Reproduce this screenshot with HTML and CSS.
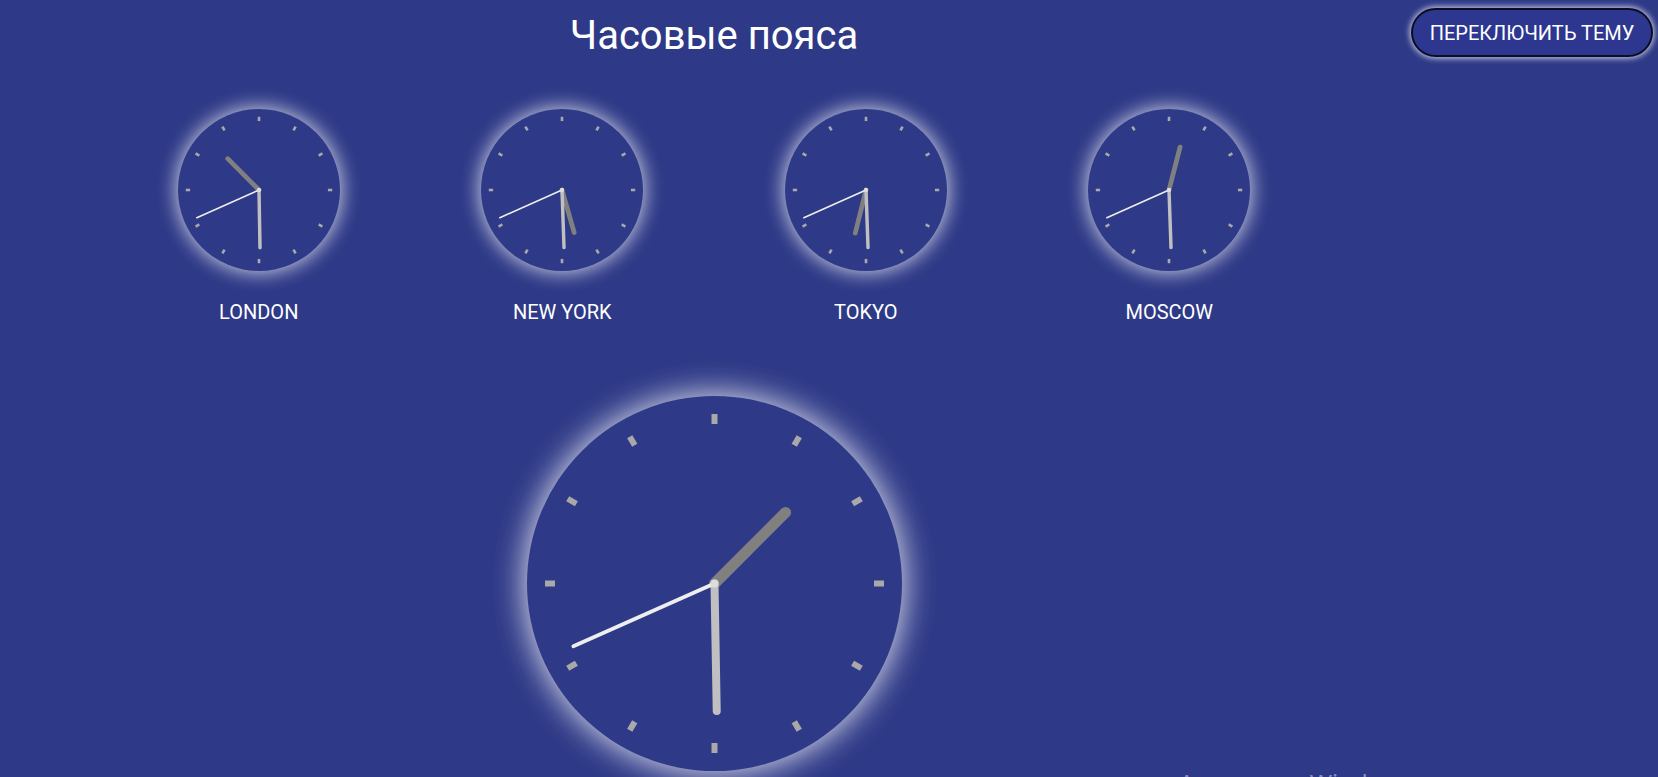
FILE: index.html
```html
<!DOCTYPE html>
<html lang="ru">
<head>
<meta charset="utf-8">
<title>Часовые пояса</title>
<link rel="stylesheet" href="styles.css">
</head>
<body>
<button class="theme-btn">ПЕРЕКЛЮЧИТЬ ТЕМУ</button>
<main class="page">
  <h1 class="title">Часовые пояса</h1>
  <section class="zones">
    <div class="zone">
      <div class="face small">
        <svg viewBox="0 0 375 375">
          <g class="ticks">
            <line x1="187.5" y1="18" x2="187.5" y2="28"/>
            <line x1="187.5" y1="18" x2="187.5" y2="28" transform="rotate(30 187.5 187.5)"/>
            <line x1="187.5" y1="18" x2="187.5" y2="28" transform="rotate(60 187.5 187.5)"/>
            <line x1="187.5" y1="18" x2="187.5" y2="28" transform="rotate(90 187.5 187.5)"/>
            <line x1="187.5" y1="18" x2="187.5" y2="28" transform="rotate(120 187.5 187.5)"/>
            <line x1="187.5" y1="18" x2="187.5" y2="28" transform="rotate(150 187.5 187.5)"/>
            <line x1="187.5" y1="18" x2="187.5" y2="28" transform="rotate(180 187.5 187.5)"/>
            <line x1="187.5" y1="18" x2="187.5" y2="28" transform="rotate(210 187.5 187.5)"/>
            <line x1="187.5" y1="18" x2="187.5" y2="28" transform="rotate(240 187.5 187.5)"/>
            <line x1="187.5" y1="18" x2="187.5" y2="28" transform="rotate(270 187.5 187.5)"/>
            <line x1="187.5" y1="18" x2="187.5" y2="28" transform="rotate(300 187.5 187.5)"/>
            <line x1="187.5" y1="18" x2="187.5" y2="28" transform="rotate(330 187.5 187.5)"/>
          </g>
          <line class="hour" x1="187.5" y1="187.5" x2="187.5" y2="85" transform="rotate(315 187.5 187.5)"/>
          <line class="minute" x1="187.5" y1="187.5" x2="187.5" y2="54" transform="rotate(179 187.5 187.5)"/>
          <line class="second" x1="187.5" y1="187.5" x2="187.5" y2="30" transform="rotate(246 187.5 187.5)"/>
          <circle class="pin" cx="187.5" cy="187.5" r="5"/>
        </svg>
      </div>
      <div class="city">LONDON</div>
    </div>
    <div class="zone">
      <div class="face small">
        <svg viewBox="0 0 375 375">
          <g class="ticks">
            <line x1="187.5" y1="18" x2="187.5" y2="28"/>
            <line x1="187.5" y1="18" x2="187.5" y2="28" transform="rotate(30 187.5 187.5)"/>
            <line x1="187.5" y1="18" x2="187.5" y2="28" transform="rotate(60 187.5 187.5)"/>
            <line x1="187.5" y1="18" x2="187.5" y2="28" transform="rotate(90 187.5 187.5)"/>
            <line x1="187.5" y1="18" x2="187.5" y2="28" transform="rotate(120 187.5 187.5)"/>
            <line x1="187.5" y1="18" x2="187.5" y2="28" transform="rotate(150 187.5 187.5)"/>
            <line x1="187.5" y1="18" x2="187.5" y2="28" transform="rotate(180 187.5 187.5)"/>
            <line x1="187.5" y1="18" x2="187.5" y2="28" transform="rotate(210 187.5 187.5)"/>
            <line x1="187.5" y1="18" x2="187.5" y2="28" transform="rotate(240 187.5 187.5)"/>
            <line x1="187.5" y1="18" x2="187.5" y2="28" transform="rotate(270 187.5 187.5)"/>
            <line x1="187.5" y1="18" x2="187.5" y2="28" transform="rotate(300 187.5 187.5)"/>
            <line x1="187.5" y1="18" x2="187.5" y2="28" transform="rotate(330 187.5 187.5)"/>
          </g>
          <line class="hour" x1="187.5" y1="187.5" x2="187.5" y2="85" transform="rotate(164 187.5 187.5)"/>
          <line class="minute" x1="187.5" y1="187.5" x2="187.5" y2="54" transform="rotate(178 187.5 187.5)"/>
          <line class="second" x1="187.5" y1="187.5" x2="187.5" y2="30" transform="rotate(246 187.5 187.5)"/>
          <circle class="pin" cx="187.5" cy="187.5" r="5"/>
        </svg>
      </div>
      <div class="city">NEW YORK</div>
    </div>
    <div class="zone">
      <div class="face small">
        <svg viewBox="0 0 375 375">
          <g class="ticks">
            <line x1="187.5" y1="18" x2="187.5" y2="28"/>
            <line x1="187.5" y1="18" x2="187.5" y2="28" transform="rotate(30 187.5 187.5)"/>
            <line x1="187.5" y1="18" x2="187.5" y2="28" transform="rotate(60 187.5 187.5)"/>
            <line x1="187.5" y1="18" x2="187.5" y2="28" transform="rotate(90 187.5 187.5)"/>
            <line x1="187.5" y1="18" x2="187.5" y2="28" transform="rotate(120 187.5 187.5)"/>
            <line x1="187.5" y1="18" x2="187.5" y2="28" transform="rotate(150 187.5 187.5)"/>
            <line x1="187.5" y1="18" x2="187.5" y2="28" transform="rotate(180 187.5 187.5)"/>
            <line x1="187.5" y1="18" x2="187.5" y2="28" transform="rotate(210 187.5 187.5)"/>
            <line x1="187.5" y1="18" x2="187.5" y2="28" transform="rotate(240 187.5 187.5)"/>
            <line x1="187.5" y1="18" x2="187.5" y2="28" transform="rotate(270 187.5 187.5)"/>
            <line x1="187.5" y1="18" x2="187.5" y2="28" transform="rotate(300 187.5 187.5)"/>
            <line x1="187.5" y1="18" x2="187.5" y2="28" transform="rotate(330 187.5 187.5)"/>
          </g>
          <line class="hour" x1="187.5" y1="187.5" x2="187.5" y2="85" transform="rotate(194 187.5 187.5)"/>
          <line class="minute" x1="187.5" y1="187.5" x2="187.5" y2="54" transform="rotate(178 187.5 187.5)"/>
          <line class="second" x1="187.5" y1="187.5" x2="187.5" y2="30" transform="rotate(246 187.5 187.5)"/>
          <circle class="pin" cx="187.5" cy="187.5" r="5"/>
        </svg>
      </div>
      <div class="city">TOKYO</div>
    </div>
    <div class="zone">
      <div class="face small">
        <svg viewBox="0 0 375 375">
          <g class="ticks">
            <line x1="187.5" y1="18" x2="187.5" y2="28"/>
            <line x1="187.5" y1="18" x2="187.5" y2="28" transform="rotate(30 187.5 187.5)"/>
            <line x1="187.5" y1="18" x2="187.5" y2="28" transform="rotate(60 187.5 187.5)"/>
            <line x1="187.5" y1="18" x2="187.5" y2="28" transform="rotate(90 187.5 187.5)"/>
            <line x1="187.5" y1="18" x2="187.5" y2="28" transform="rotate(120 187.5 187.5)"/>
            <line x1="187.5" y1="18" x2="187.5" y2="28" transform="rotate(150 187.5 187.5)"/>
            <line x1="187.5" y1="18" x2="187.5" y2="28" transform="rotate(180 187.5 187.5)"/>
            <line x1="187.5" y1="18" x2="187.5" y2="28" transform="rotate(210 187.5 187.5)"/>
            <line x1="187.5" y1="18" x2="187.5" y2="28" transform="rotate(240 187.5 187.5)"/>
            <line x1="187.5" y1="18" x2="187.5" y2="28" transform="rotate(270 187.5 187.5)"/>
            <line x1="187.5" y1="18" x2="187.5" y2="28" transform="rotate(300 187.5 187.5)"/>
            <line x1="187.5" y1="18" x2="187.5" y2="28" transform="rotate(330 187.5 187.5)"/>
          </g>
          <line class="hour" x1="187.5" y1="187.5" x2="187.5" y2="85" transform="rotate(14.5 187.5 187.5)"/>
          <line class="minute" x1="187.5" y1="187.5" x2="187.5" y2="54" transform="rotate(178 187.5 187.5)"/>
          <line class="second" x1="187.5" y1="187.5" x2="187.5" y2="30" transform="rotate(246 187.5 187.5)"/>
          <circle class="pin" cx="187.5" cy="187.5" r="5"/>
        </svg>
      </div>
      <div class="city">MOSCOW</div>
    </div>
  </section>
  <section class="local">
    <div class="face big">
      <svg viewBox="0 0 375 375">
        <g class="ticks">
          <line x1="187.5" y1="18" x2="187.5" y2="28"/>
          <line x1="187.5" y1="18" x2="187.5" y2="28" transform="rotate(30 187.5 187.5)"/>
          <line x1="187.5" y1="18" x2="187.5" y2="28" transform="rotate(60 187.5 187.5)"/>
          <line x1="187.5" y1="18" x2="187.5" y2="28" transform="rotate(90 187.5 187.5)"/>
          <line x1="187.5" y1="18" x2="187.5" y2="28" transform="rotate(120 187.5 187.5)"/>
          <line x1="187.5" y1="18" x2="187.5" y2="28" transform="rotate(150 187.5 187.5)"/>
          <line x1="187.5" y1="18" x2="187.5" y2="28" transform="rotate(180 187.5 187.5)"/>
          <line x1="187.5" y1="18" x2="187.5" y2="28" transform="rotate(210 187.5 187.5)"/>
          <line x1="187.5" y1="18" x2="187.5" y2="28" transform="rotate(240 187.5 187.5)"/>
          <line x1="187.5" y1="18" x2="187.5" y2="28" transform="rotate(270 187.5 187.5)"/>
          <line x1="187.5" y1="18" x2="187.5" y2="28" transform="rotate(300 187.5 187.5)"/>
          <line x1="187.5" y1="18" x2="187.5" y2="28" transform="rotate(330 187.5 187.5)"/>
        </g>
        <line class="hour" x1="187.5" y1="187.5" x2="187.5" y2="87" transform="rotate(45 187.5 187.5)"/>
        <line class="minute" x1="187.5" y1="187.5" x2="187.5" y2="60" transform="rotate(179 187.5 187.5)"/>
        <line class="second" x1="187.5" y1="187.5" x2="187.5" y2="33" transform="rotate(246 187.5 187.5)"/>
        <circle class="pin" cx="187.5" cy="187.5" r="4"/>
      </svg>
    </div>
  </section>
</main>
<div class="watermark">Активация Windows</div>
</body>
</html>
```
FILE: styles.css
```css
html, body {
  margin: 0;
  padding: 0;
  height: 100%;
  overflow: hidden;
}
body {
  background: #2e3987;
  font-family: Roboto, "Liberation Sans", sans-serif;
  color: #ffffff;
}
.page {
  width: 1428px;
  display: flex;
  flex-direction: column;
  align-items: center;
}
.title {
  margin: 12px 0 0;
  font-size: 40px;
  font-weight: 400;
  line-height: 47px;
}
.zones {
  margin-top: 50px;
  display: flex;
  gap: 141.5px;
}
.zone {
  display: flex;
  flex-direction: column;
  align-items: center;
}
.face {
  border-radius: 50%;
  background: #2e3987;
}
.face svg {
  display: block;
  width: 100%;
  height: 100%;
}
.small {
  width: 162px;
  height: 162px;
  box-shadow: 0 0 20px 1px rgba(255, 255, 255, 0.8);
}
.big {
  width: 375px;
  height: 375px;
  box-shadow: 0 0 32px 2px rgba(255, 255, 255, 0.85);
}
.ticks line {
  stroke: #a9a9a9;
  stroke-width: 6;
}
.hour {
  stroke: #808080;
  stroke-width: 11;
  stroke-linecap: round;
}
.minute {
  stroke: #c0c0c0;
  stroke-width: 8;
  stroke-linecap: round;
}
.second {
  stroke: #eeeeee;
  stroke-width: 3.8;
  stroke-linecap: round;
}
.pin {
  fill: #dddddd;
}
.city {
  margin-top: 30px;
  font-size: 20px;
  line-height: 23px;
}
.local {
  margin-top: 72px;
}
.theme-btn {
  position: absolute;
  top: 8px;
  right: 5px;
  width: 242px;
  height: 49px;
  border: 2px solid #0b0d24;
  border-radius: 25px;
  background: #2d3790;
  color: #ffffff;
  font-family: Roboto, "Liberation Sans", sans-serif;
  font-size: 20px;
  font-weight: 400;
  padding: 0;
  box-shadow: 0 0 6px 1px rgba(255, 255, 255, 0.8);
}
.watermark {
  position: absolute;
  left: 1179px;
  top: 766px;
  font-family: "Noto Sans", "Open Sans", sans-serif;
  font-size: 24px;
  color: rgba(255, 255, 255, 0.45);
  white-space: nowrap;
}
```
